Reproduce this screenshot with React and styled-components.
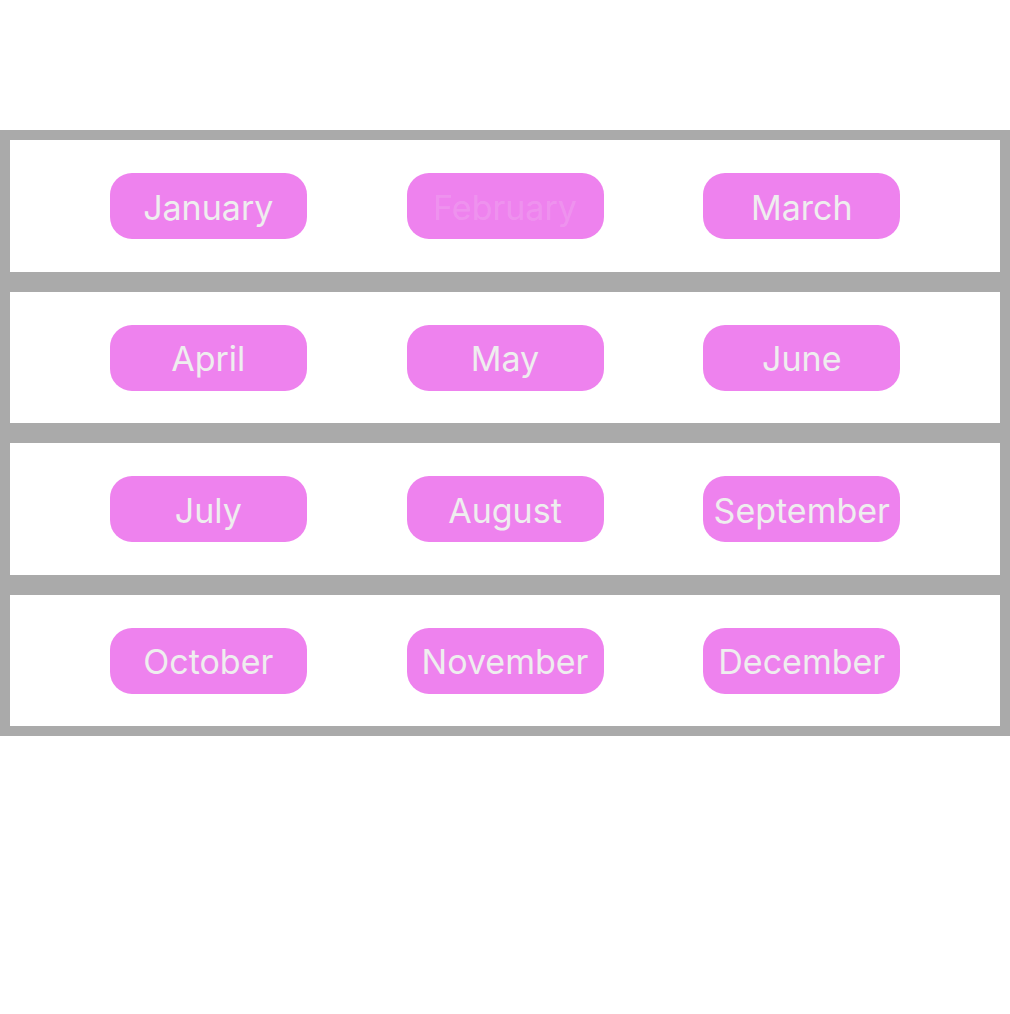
import React from 'react';
import styled, { createGlobalStyle } from 'styled-components';

const GlobalStyle = createGlobalStyle`
  html, body {
    margin: 0;
    padding: 0;
    background: #ffffff;
  }
  body {
    font-family: Inter, "Noto Sans", "Liberation Sans", sans-serif;
  }
`;

const Page = styled.div`
  width: 1010px;
  padding-top: 130px;
`;

const Grid = styled.div`
  display: flex;
  flex-direction: column;
`;

const Row = styled.div`
  display: flex;
  align-items: center;
  justify-content: space-evenly;
  height: 131.5px;
  border: 10px solid #aaaaaa;
  background: #ffffff;
`;

const MonthButton = styled.button`
  width: 197px;
  height: 66px;
  margin-top: 1px;
  border: none;
  border-radius: 22px;
  background: #ee82ee;
  color: ${props => (props.disabled ? 'rgba(238, 238, 238, 0.18)' : '#eeeeee')};
  font-family: Inter, "Noto Sans", "Liberation Sans", sans-serif;
  font-size: 34px;
  font-weight: 400;
  padding: 2px 0 0;
  cursor: ${props => (props.disabled ? 'default' : 'pointer')};
`;

const months = [
  ['January', 'February', 'March'],
  ['April', 'May', 'June'],
  ['July', 'August', 'September'],
  ['October', 'November', 'December']
];

// February is shown as unavailable
const disabledMonths = ['February'];

function App() {
  return (
    <Page>
      <GlobalStyle />
      <Grid>
        {months.map(row => (
          <Row key={row[0]}>
            {row.map(month => (
              <MonthButton key={month} disabled={disabledMonths.includes(month)}>
                {month}
              </MonthButton>
            ))}
          </Row>
        ))}
      </Grid>
    </Page>
  );
}

export default App;
